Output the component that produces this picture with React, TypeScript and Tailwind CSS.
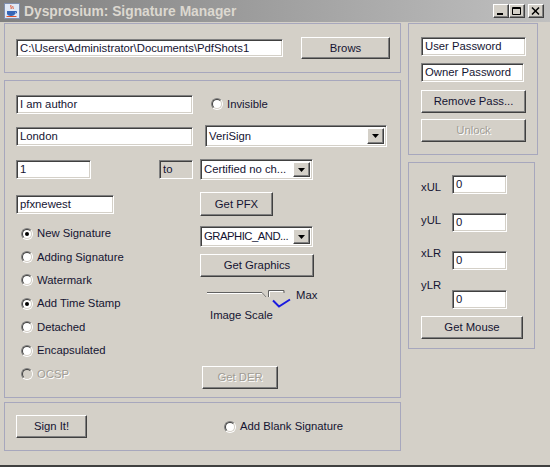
import React from "react";

const SUNKEN =
  "border border-t-[#808080] border-l-[#808080] border-b-white border-r-white shadow-[inset_1px_1px_0_#404040,inset_-1px_-1px_0_#d4d0c8]";
const RAISED =
  "border border-t-white border-l-white border-b-[#404040] border-r-[#404040] shadow-[inset_-1px_-1px_0_#808080]";
const PANEL = "border border-[#a7a7bd]";
const DISABLED = "text-[#a19d95] [text-shadow:1px_1px_0_#ffffff]";

function Field({ value, className, grey }: { value: string; className: string; grey?: boolean }) {
  return (
    <div
      className={`${SUNKEN} ${grey ? "bg-[#d4d0c8]" : "bg-white"} ${className} flex items-center pl-[3px] overflow-hidden whitespace-nowrap shrink-0`}
    >
      {value}
    </div>
  );
}

function Button({ label, className, disabled }: { label: string; className: string; disabled?: boolean }) {
  return (
    <div
      className={`${RAISED} bg-[#d4d0c8] ${className} flex items-center justify-center whitespace-nowrap shrink-0 ${disabled ? DISABLED : ""}`}
    >
      {label}
    </div>
  );
}

function Combo({ value, className, tight }: { value: string; className: string; tight?: boolean }) {
  return (
    <div className={`${SUNKEN} bg-white ${className} flex items-center p-[2px] shrink-0`}>
      <span className={`flex-1 min-w-0 pl-[1px] whitespace-nowrap ${tight ? "tracking-[-0.5px]" : ""}`}>{value}</span>
      <span className={`${RAISED} bg-[#d4d0c8] w-[17px] h-full flex items-center justify-center shrink-0`}>
        <svg width="7" height="4" viewBox="0 0 7 4">
          <path d="M0 0h7L3.5 4z" fill="#000" />
        </svg>
      </span>
    </div>
  );
}

function Radio({ checked, disabled }: { checked?: boolean; disabled?: boolean }) {
  return (
    <span className="w-3 h-3 rounded-full border border-t-[#808080] border-l-[#808080] border-r-white border-b-white flex shrink-0">
      <span
        className={`flex-1 rounded-full border border-t-[#404040] border-l-[#404040] border-r-[#d4d0c8] border-b-[#d4d0c8] flex items-center justify-center ${disabled ? "bg-[#d4d0c8]" : "bg-white"}`}
      >
        {checked && <span className="w-1 h-1 rounded-full bg-black" />}
      </span>
    </span>
  );
}

function RadioLabel({ label, checked, disabled }: { label: string; checked?: boolean; disabled?: boolean }) {
  return (
    <div className="flex items-center gap-[4px] h-[23.4px]">
      <Radio checked={checked} disabled={disabled} />
      <span className={disabled ? DISABLED : ""}>{label}</span>
    </div>
  );
}

function JavaIcon() {
  return (
    <svg width="16" height="16" viewBox="0 0 16 16">
      <rect x="0.5" y="0.5" width="15" height="15" fill="#dfe8f6" stroke="#7f8fb0" />
      <path d="M7 2c-1 1.5 1 2.5 0 4M9 3c-1 1 1 2 0 3" stroke="#e0502a" strokeWidth="1" fill="none" />
      <path d="M3 8h8v2.5c0 1.5-1.5 2.5-4 2.5s-4-1-4-2.5z" fill="#3566b8" />
      <path d="M11 8.5h1.5v1.5H11" stroke="#3566b8" fill="none" />
      <path d="M2.5 13.5h10" stroke="#e0502a" />
    </svg>
  );
}

function WinButton({ kind }: { kind: "min" | "max" | "close" }) {
  return (
    <div className={`${RAISED} bg-[#d4d0c8] w-[16px] h-[14px] flex items-center justify-center`}>
      <svg width="10" height="9" viewBox="0 0 10 9">
        {kind === "min" && <rect x="1" y="6" width="6" height="2" fill="#000" />}
        {kind === "max" && <path d="M0.5 0.5h8v7h-8z M0.5 1.5h8" stroke="#000" fill="none" />}
        {kind === "close" && <path d="M1 0.5l7 7M8 0.5l-7 7" stroke="#000" strokeWidth="1.5" />}
      </svg>
    </div>
  );
}

function CoordRow({ label, labelClass, className }: { label: string; labelClass: string; className: string }) {
  return (
    <div className={`flex items-start ${className}`}>
      <span className={`w-[31px] ${labelClass}`}>{label}</span>
      <Field value="0" className="w-[55px] h-[19px]" />
    </div>
  );
}

export default function App() {
  return (
    <div className="w-[550px] h-[467px] bg-[#d4d0c8] flex flex-col overflow-hidden text-[11.3px] leading-[13px] text-[#141432] [font-family:'Liberation_Sans',Arial,sans-serif] border-b-2 border-[#404040]">
      {/* Title bar */}
      <div className="h-[22px] shrink-0 flex items-center bg-linear-to-r from-[#808080] to-[#c0c0c0]">
        <div className="ml-[4px]">
          <JavaIcon />
        </div>
        <span className="ml-[4px] text-[13.8px] font-bold text-[#dcd8d0]">Dysprosium: Signature Manager</span>
        <div className="ml-auto mr-[6px] flex items-center">
          <WinButton kind="min" />
          <WinButton kind="max" />
          <div className="ml-[3px]">
            <WinButton kind="close" />
          </div>
        </div>
      </div>

      <div className="flex pl-[4px] pt-[1px]">
        {/* Left column */}
        <div className="w-[397px] flex flex-col shrink-0">
          <div className={`${PANEL} h-[50px] flex items-center`}>
            <Field value={"C:\\Users\\Administrator\\Documents\\PdfShots1"} className="ml-[11px] w-[267px] h-[18px]" />
            <Button label="Brows" className="ml-[18px] w-[89px] h-[22px]" />
          </div>

          <div className={`${PANEL} mt-[7px] h-[318px] flex flex-col`}>
            <div className="mt-[12px] h-[22px] flex items-center">
              <Field value="I am author" className="ml-[11px] w-[177px] h-[19px]" />
              <div className="ml-[18px] flex items-center gap-[4px]">
                <Radio />
                <span>Invisible</span>
              </div>
            </div>
            <div className="mt-[10px] h-[22px] flex items-center">
              <Field value="London" className="ml-[11px] w-[177px] h-[19px]" />
              <Combo value="VeriSign" className="ml-[12px] w-[182px] h-[22px]" />
            </div>
            <div className="mt-[12px] h-[21px] flex items-center">
              <Field value="1" className="ml-[11px] w-[75px] h-[19px]" />
              <Field value="to" grey className="ml-[68px] w-[34px] h-[19px]" />
              <Combo value="Certified no ch..." className="ml-[7px] w-[113px] h-[21px]" />
            </div>
            <div className="mt-[12px] h-[24px] flex items-center">
              <Field value="pfxnewest" className="ml-[11px] w-[98px] h-[19px]" />
              <Button label="Get PFX" className="ml-[86px] w-[73px] h-[24px]" />
            </div>

            <div className="mt-[6px] flex">
              <div className="w-[195px] pl-[16px] flex flex-col shrink-0">
                <RadioLabel label="New Signature" checked />
                <RadioLabel label="Adding Signature" />
                <RadioLabel label="Watermark" />
                <RadioLabel label="Add Time Stamp" checked />
                <RadioLabel label="Detached" />
                <RadioLabel label="Encapsulated" />
                <RadioLabel label="OCSP" disabled />
              </div>
              <div className="flex flex-col">
                <Combo value="GRAPHIC_AND..." tight className="mt-[4px] w-[113px] h-[21px]" />
                <Button label="Get Graphics" className="mt-[7px] w-[114px] h-[23px]" />
                <div className="mt-[8px] flex flex-col">
                  <div className="flex items-start h-[22px]">
                    <svg width="88" height="22" viewBox="0 0 88 22" className="ml-[5px] overflow-visible">
                      <path d="M2 7.5h55" stroke="#606060" />
                      <path d="M2 8.5h55" stroke="#ffffff" />
                      <path d="M57 7.5l4 4.5" stroke="#808080" />
                      <path d="M63.5 12V5.5H79V8" stroke="#606060" fill="none" />
                      <path d="M64.5 12V6.5H78" stroke="#ffffff" fill="none" />
                      <path d="M68 15.5l6 6 11-7" stroke="#1a1ae0" strokeWidth="2" fill="none" />
                    </svg>
                    <span className="ml-[3px] mt-[4px]">Max</span>
                  </div>
                  <span className="ml-[10px] mt-[2px]">Image Scale</span>
                </div>
                <Button label="Get DER" disabled className="mt-[44px] ml-[2px] w-[76px] h-[23px]" />
              </div>
            </div>
          </div>

          <div className={`${PANEL} mt-[4px] h-[49px] flex items-center`}>
            <Button label="Sign It!" className="ml-[11px] w-[71px] h-[23px]" />
            <div className="ml-[137px] flex items-center gap-[4px]">
              <Radio />
              <span>Add Blank Signature</span>
            </div>
          </div>
        </div>

        {/* Right column */}
        <div className="ml-[7px] flex flex-col">
          <div className={`${PANEL} w-[130px] h-[132px] flex flex-col pl-[12px] pt-[13px]`}>
            <Field value="User Password" className="w-[105px] h-[19px]" />
            <Field value="Owner Password" className="mt-[7px] w-[103px] h-[19px]" />
            <Button label="Remove Pass..." className="mt-[8px] w-[105px] h-[23px]" />
            <Button label="Unlock" disabled className="mt-[6px] w-[105px] h-[23px]" />
          </div>
          <div className={`${PANEL} mt-[7px] w-[127px] h-[187px] flex flex-col pl-[12px] pt-[12px]`}>
            <CoordRow label="xUL" labelClass="mt-[5.5px]" className="" />
            <CoordRow label="yUL" labelClass="mt-[0.5px]" className="mt-[19px]" />
            <CoordRow label="xLR" labelClass="-mt-[4.5px]" className="mt-[19px]" />
            <CoordRow label="yLR" labelClass="-mt-[11.5px]" className="mt-[20px]" />
            <Button label="Get Mouse" className="mt-[7px] w-[102px] h-[23px]" />
          </div>
        </div>
      </div>
    </div>
  );
}
